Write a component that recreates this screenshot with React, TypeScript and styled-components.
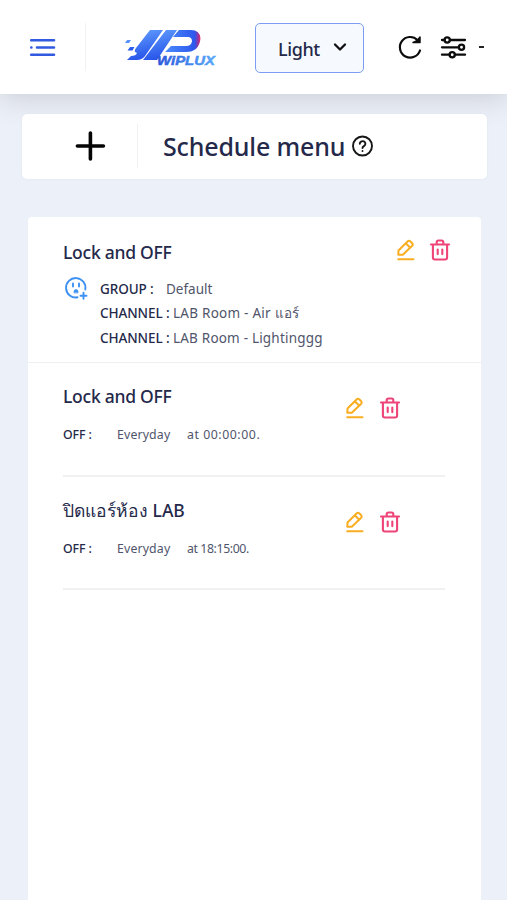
import React from "react";
import styled, { createGlobalStyle } from "styled-components";

const GlobalStyle = createGlobalStyle`
  * { box-sizing: border-box; }
  html, body { margin: 0; padding: 0; overflow: hidden; }
  body { background: #ecf0f8; font-family: "Noto Sans", "Open Sans", sans-serif; color: #24294a; }
  svg { display: block; flex: none; overflow: visible; }
`;

const Page = styled.div`
  height: 900px;
  display: flex;
  flex-direction: column;
  overflow: hidden;
  background: #ecf0f8;
`;

const Header = styled.header`
  height: 94px;
  flex: none;
  display: flex;
  align-items: center;
  padding-left: 29px;
  background: #fff;
  box-shadow: 0 4px 26px 0 rgba(90, 97, 105, 0.24);
`;

const Divider = styled.div<{ $height: number }>`
  width: 1px;
  flex: none;
  height: ${(p) => p.$height}px;
  background: #f0f2f5;
`;

const IconButton = styled.button<{ $left?: number }>`
  display: flex;
  flex: none;
  padding: 0;
  border: 0;
  background: none;
  margin-left: ${(p) => p.$left ?? 0}px;
`;

const HeaderDivider = styled(Divider)`
  margin-left: 29px;
`;

const Brand = styled.div`
  margin-left: 39px;
  width: 92px;
`;

const ThemeSelect = styled.button`
  width: 109px;
  height: 50px;
  flex: none;
  margin: 1px 0 0 38px;
  padding: 0 16px 0 22px;
  display: flex;
  align-items: center;
  justify-content: space-between;
  border: 1.5px solid #7d9cf5;
  border-radius: 5px;
  background: #f6f9fe;
  color: #24294a;
  font: 500 18px "Noto Sans", sans-serif;
  letter-spacing: -0.4px;
`;

const ThemeName = styled.span`
  padding-top: 2px;
`;

const Dash = styled.span`
  width: 5px;
  height: 2px;
  margin-left: 13px;
  background: #222;
`;

const TitleCard = styled.section`
  height: 65px;
  flex: none;
  margin: 20px 20px 0 22px;
  padding: 0 0 2px 53px;
  display: flex;
  align-items: center;
  background: #fff;
  border-radius: 5px;
  box-shadow: 0 0 2px rgba(80, 90, 110, 0.08);
`;

const TitleDivider = styled(Divider)`
  margin-left: 31px;
`;

const PageTitle = styled.h1`
  width: 189px;
  margin: 0 0 0 25px;
  font-size: 25px;
  font-weight: 500;
  line-height: 36px;
  letter-spacing: -0.15px;
  white-space: nowrap;
`;

const ListCard = styled.main`
  flex: 1;
  margin: 38px 26px 0 28px;
  background: #fff;
  border-radius: 4px 4px 0 0;
`;

const Summary = styled.section`
  height: 146px;
  display: flex;
  justify-content: space-between;
  padding: 22px 31px 0 35px;
  border-bottom: 1px solid #edeff3;
`;

const ItemTitle = styled.h2`
  margin: 0;
  font-size: 17.5px;
  font-weight: 500;
  line-height: 27px;
  letter-spacing: 0;
  white-space: nowrap;

  &:lang(en) {
    letter-spacing: -0.25px;
  }
`;

const Device = styled.div`
  display: flex;
  gap: 12px;
  margin-top: 11px;
  padding-left: 2px;
`;

const Line = styled.div`
  display: flex;
  line-height: 24.4px;
  font-size: 13.5px;
  white-space: nowrap;
`;

const Label = styled.span<{ $width: number }>`
  width: ${(p) => p.$width}px;
  flex: none;
  font-weight: 500;
  letter-spacing: -0.1px;
`;

const Value = styled.span<{ $width?: number; $tracking?: number }>`
  width: ${(p) => (p.$width ? `${p.$width}px` : "auto")};
  flex: none;
  color: #50556b;
  letter-spacing: ${(p) => p.$tracking ?? 0}px;
`;

const Actions = styled.div<{ $gap: number }>`
  display: flex;
  gap: ${(p) => p.$gap}px;
`;

const Schedule = styled.article`
  height: 113.5px;
  margin: 0 36px 0 35px;
  padding: 20px 45px 0 0;
  display: flex;
  justify-content: space-between;
  border-bottom: 2px solid #f0f1f3;
`;

const ScheduleActions = styled(Actions)`
  margin-top: 14px;
`;

const ScheduleLine = styled(Line)`
  margin-top: 12px;
  font-size: 12.3px;
  line-height: 25px;
`;

const MenuIcon = () => (
  <svg width="27" height="19" viewBox="0 0 27 19" fill="none" stroke="#315ae0" strokeWidth="2.6" strokeLinecap="round">
    <path d="M2.2 2.3H25M8 9.5H25M2.2 16.7H25M2.3 9.5h.1" />
  </svg>
);

const Logo = () => (
  <svg width="92" height="38" viewBox="0 0 92 38">
    <defs>
      <linearGradient id="mark" x1="0" y1="0" x2="0.3" y2="1">
        <stop offset="0" stopColor="#65a2ff" />
        <stop offset="1" stopColor="#2855ea" />
      </linearGradient>
      <linearGradient id="bowl" x1="0" y1="0" x2="1" y2="0">
        <stop offset="0" stopColor="#4b8bfc" />
        <stop offset="0.84" stopColor="#2d58ec" />
        <stop offset="0.95" stopColor="#a83193" />
        <stop offset="1" stopColor="#ef345d" />
      </linearGradient>
      <linearGradient id="word" x1="0" y1="0" x2="1" y2="0">
        <stop offset="0" stopColor="#2857dc" />
        <stop offset="1" stopColor="#58a9fb" />
      </linearGradient>
    </defs>
    <g fill="url(#mark)">
      <path d="M25 2h13L20 28q-3 4-8 4H2l4-4q5 0 6-3-4-1-1-5Z" />
      <path d="M41 2h11L32 32H18Z" />
      <path d="M2 12h4l-2 3H0ZM5 19h4.500l-2 3.500H2.500Z" />
    </g>
    <path d="M54 2h12q9 0 9.500 8.500Q74 24 61 24H40l6-6h15q5 0 6-4.500 0-4.500-4-4.500H48Z" fill="url(#bowl)" />
    <text x="32" y="36.5" fill="url(#word)" fontFamily="Liberation Sans" fontSize="13.5" fontWeight="700" fontStyle="italic" textLength="58" lengthAdjust="spacingAndGlyphs" stroke="url(#word)" strokeWidth="0.5">WiPLUX</text>
  </svg>
);

const ChevronIcon = () => (
  <svg width="14" height="9" viewBox="0 0 14 9" fill="none" stroke="#111" strokeWidth="2.3" strokeLinecap="round" strokeLinejoin="round">
    <path d="m2 1.500 5 5 5-5" />
  </svg>
);

const RefreshIcon = () => (
  <svg width="24" height="24" viewBox="0 0 24 24" fill="none" stroke="#0c0c0c" strokeWidth="2.2" strokeLinecap="round" strokeLinejoin="round">
    <path d="M22 15.500A10.300 10.300 0 1 1 19.500 5" />
    <path d="M22 2V7.500H15Q19 6.500 22 2Z" fill="#0c0c0c" strokeWidth="1.500" />
  </svg>
);

const SlidersIcon = () => (
  <svg width="26" height="24" viewBox="0 0 26 24" fill="none" stroke="#0c0c0c" strokeWidth="2.300" strokeLinecap="round">
    <path d="M2 5H4.500M10 5H25M2 12.300H18.500M2 19.700H9.500M15 19.700H25" />
    <circle cx="7.200" cy="5" r="2.600" />
    <circle cx="21.500" cy="12.300" r="2.600" />
    <circle cx="12.200" cy="19.700" r="2.600" />
  </svg>
);

const PlusIcon = () => (
  <svg width="31" height="30" viewBox="0 0 31 30" fill="none" stroke="#050505" strokeWidth="3.600" strokeLinecap="round">
    <path d="M15.400 2V28M2.400 15H28.400" />
  </svg>
);

const HelpIcon = () => (
  <svg width="22" height="22" viewBox="0 0 22 22" fill="none" stroke="#161616" strokeWidth="1.900" strokeLinecap="round" strokeLinejoin="round">
    <circle cx="10.500" cy="11" r="9.500" />
    <path d="M7.800 8.800a2.800 2.600 0 1 1 4.400 2.100Q10.500 11.800 10.500 13.100M10.500 16v.1" />
  </svg>
);

const OutletIcon = () => (
  <svg width="23" height="23" viewBox="0 0 23 23" fill="none" stroke="#3d91f2" strokeWidth="1.900" strokeLinecap="round">
    <path d="M20.300 12.500A9.700 9.700 0 1 0 12.500 20.300M8 6.500v3M14 6.500v3M18.500 15.700v6M15.500 18.700h6" />
    <path d="M9 15.500v-1a2 2 0 0 1 4 0v1Z" fill="#3d91f2" strokeWidth=".7" />
  </svg>
);

const EditIcon = () => (
  <svg width="18" height="22" viewBox="0 0 18 22" fill="none" stroke="#f9ad21" strokeWidth="2" strokeLinecap="round" strokeLinejoin="round">
    <path d="M1.300 15.700 1.500 11.500 10.800 2.300q1.200-1.100 2.400 0l2 2q1.100 1.200 0 2.400L5.800 15.700ZM9 4.500l4 4M1.200 20.200h15.300" />
  </svg>
);

const TrashIcon = () => (
  <svg width="20" height="22" viewBox="0 0 20 22" fill="none" stroke="#ee4478" strokeWidth="2.100" strokeLinecap="round" strokeLinejoin="round">
    <path d="M1 5.500h18M2.900 5.500v13q0 2 2 2h10.200q2 0 2-2v-13M6.700 5V3.200q0-1.700 1.700-1.700h3.200q1.700 0 1.700 1.700V5M7.700 10.500v4.600M12.300 10.500v4.600" />
  </svg>
);

const schedules = [
  { title: "Lock and OFF", lang: "en", time: "at 00:00:00.", tracking: 0.55 },
  { title: "ปิดแอร์ห้อง LAB", lang: "th", time: "at 18:15:00.", tracking: -0.4 },
];

export default function App() {
  return (
    <Page>
      <GlobalStyle />
      <Header>
        <IconButton aria-label="Menu"><MenuIcon /></IconButton>
        <HeaderDivider $height={48} />
        <Brand><Logo /></Brand>
        <ThemeSelect><ThemeName>Light</ThemeName><ChevronIcon /></ThemeSelect>
        <IconButton $left={34} aria-label="Refresh"><RefreshIcon /></IconButton>
        <IconButton $left={18} aria-label="Settings"><SlidersIcon /></IconButton>
        <Dash />
      </Header>
      <TitleCard>
        <IconButton aria-label="Add schedule"><PlusIcon /></IconButton>
        <TitleDivider $height={44} />
        <PageTitle>Schedule menu</PageTitle>
        <IconButton aria-label="Help"><HelpIcon /></IconButton>
      </TitleCard>
      <ListCard>
        <Summary>
          <div>
            <ItemTitle lang="en">Lock and OFF</ItemTitle>
            <Device>
              <OutletIcon />
              <div>
                <Line><Label $width={66}>GROUP :</Label><Value>Default</Value></Line>
                <Line><Label $width={73}>CHANNEL :</Label><Value $tracking={0.25}>LAB Room - Air แอร์</Value></Line>
                <Line><Label $width={73}>CHANNEL :</Label><Value $tracking={0.2}>LAB Room - Lightinggg</Value></Line>
              </div>
            </Device>
          </div>
          <Actions $gap={15}>
            <IconButton aria-label="Edit"><EditIcon /></IconButton>
            <IconButton aria-label="Delete"><TrashIcon /></IconButton>
          </Actions>
        </Summary>
        {schedules.map((s) => (
          <Schedule key={s.title}>
            <div>
              <ItemTitle lang={s.lang}>{s.title}</ItemTitle>
              <ScheduleLine>
                <Label $width={54}>OFF :</Label>
                <Value $width={70} $tracking={0.15}>Everyday</Value>
                <Value $tracking={s.tracking}>{s.time}</Value>
              </ScheduleLine>
            </div>
            <ScheduleActions $gap={16}>
              <IconButton aria-label="Edit"><EditIcon /></IconButton>
              <IconButton aria-label="Delete"><TrashIcon /></IconButton>
            </ScheduleActions>
          </Schedule>
        ))}
      </ListCard>
    </Page>
  );
}
